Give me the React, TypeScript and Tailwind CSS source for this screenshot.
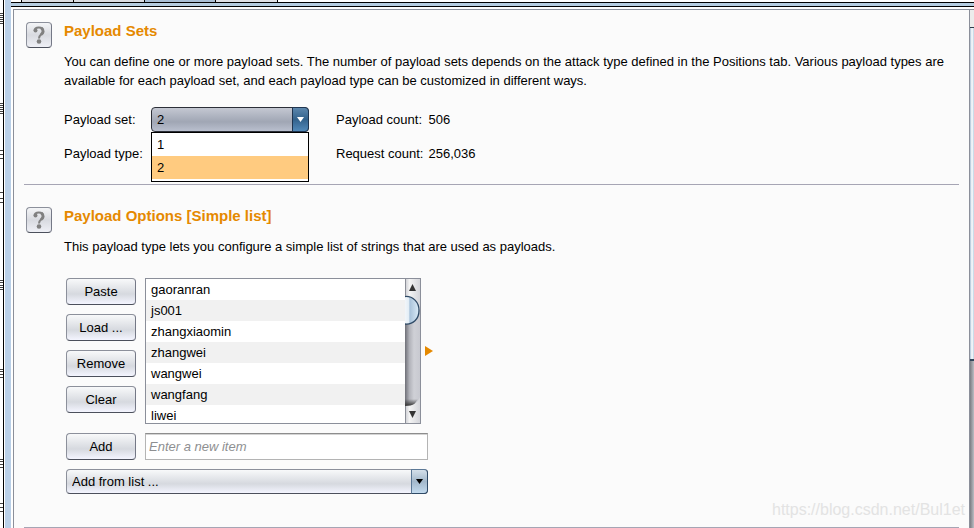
import React, { useState } from "react";

const payloads = [
  "gaoranran",
  "js001",
  "zhangxiaomin",
  "zhangwei",
  "wangwei",
  "wangfang",
  "liwei",
];

const listActions = ["Paste", "Load ...", "Remove", "Clear"];

// rows where the editor behind the window still shows
const editorMarks = [
  13, 15, 17, 19, 21, 23,
  103, 105, 107, 109, 111, 113,
  150, 154, 158,
  192, 198, 202,
  280, 282, 285, 287, 289,
  369, 371, 374, 377,
  459, 461, 464, 467,
  503, 507, 511,
];

function HelpButton() {
  return (
    <button
      type="button"
      aria-label="Help"
      className="flex h-[26px] w-[26px] shrink-0 items-center justify-center rounded border border-[#8c909b] border-r-[#747886] border-b-[#4c505c] bg-linear-to-b from-[#f4f5f7] via-[#d8dae0] to-[#eff0f6]"
    >
      <svg width="12" height="18" viewBox="0 0 12 18" fill="none" aria-hidden="true">
        <path d="M1.500 4.500C2 0.500 10 0.500 10 5C10 8.500 6 8 6 12.500" stroke="#808080" strokeWidth="2" />
        <path d="M8.500 2C11 4.500 10.500 7 8 8.500" stroke="#808080" strokeWidth="3" />
        <circle cx="2.500" cy="4.500" r="2" fill="#808080" />
        <circle cx="6" cy="15.500" r="2.300" fill="#808080" />
      </svg>
    </button>
  );
}

function PushButton({ label }: { label: string }) {
  return (
    <button
      type="button"
      className="h-[27px] w-[70px] rounded border border-[#8c909b] border-r-[#747886] border-b-[#4c505c] bg-linear-to-b from-[#f8f9fa] via-[#d6d9df] via-60% to-[#f4f5ff]"
    >
      {label}
    </button>
  );
}

function SectionTitle({ children }: { children: React.ReactNode }) {
  return <h2 className="text-[15px] leading-[18px] font-bold text-[#e58900]">{children}</h2>;
}

function ListScrollbar() {
  return (
    <svg width="15" height="144" viewBox="0 0 15 144" className="shrink-0" aria-hidden="true">
      <defs>
        <linearGradient id="cap">
          <stop offset="0" stopColor="#c9cad0" />
          <stop offset="0.3" stopColor="#f4f4f4" />
          <stop offset="1" stopColor="#d4d5da" />
        </linearGradient>
        <linearGradient id="track">
          <stop offset="0" stopColor="#6e6f77" />
          <stop offset="0.3" stopColor="#b2b3ba" />
          <stop offset="0.6" stopColor="#cfd0d6" />
          <stop offset="1" stopColor="#c8c9d0" />
        </linearGradient>
        <linearGradient id="thumb">
          <stop offset="0" stopColor="#f2f6fa" />
          <stop offset="0.25" stopColor="#e4eef6" />
          <stop offset="0.35" stopColor="#aac3da" />
          <stop offset="1" stopColor="#dcecf8" />
        </linearGradient>
        <linearGradient id="shade" x2="0" y2="1">
          <stop offset="0" stopColor="#333" stopOpacity="0" />
          <stop offset="1" stopColor="#333" />
        </linearGradient>
      </defs>
      <rect width="15" height="144" fill="url(#track)" />
      <path d="M0 120H13L8 127H0Z" fill="url(#shade)" />
      <path d="M0 0H15V32C15 22 8 17 0 17Z" fill="url(#cap)" />
      <path d="M0 144H15V118C13 124 8 127 0 127Z" fill="url(#cap)" />
      <path d="M0 17.500C8 17 14 23 14 31.500C14 40 8 46 0 45" fill="url(#thumb)" stroke="#2f4a66" strokeWidth="1.300" />
      <path d="M0 0V17M0 127V144" stroke="#8c8f98" strokeWidth="2" />
      <path d="M4 12L7.500 5L11 12Z" fill="#333" />
      <path d="M4 132L7.500 139L11 132Z" fill="#333" />
    </svg>
  );
}

function WindowScrollbar() {
  return (
    <div className="flex w-[5px] shrink-0 flex-col border-l border-[#8b8f9a]" aria-hidden="true">
      <div className="h-[18px] border-b border-[#2f3d4c] bg-[#ececec]" />
      <div className="h-[333px] border-b-2 border-[#33475b] bg-linear-to-r from-[#a9c1d6] via-white to-[#b9d0e2]" />
      <div className="flex-1 bg-linear-to-r from-[#7c7d83] to-[#bcbdc3]" />
    </div>
  );
}

function App() {
  const [payloadSet, setPayloadSet] = useState("2");
  const [newItem, setNewItem] = useState("");

  return (
    <div className="flex h-screen overflow-hidden bg-white font-['Liberation_Sans',Arial,sans-serif] text-[13px] leading-[19px] text-black">
      <svg className="h-full w-[3px] shrink-0" aria-hidden="true">
        {editorMarks.map((y) => (
          <rect key={y} y={y} width="3" height="1" fill="#444" />
        ))}
      </svg>
      <div className="w-[2px] shrink-0 border-l border-black" />
      <div className="w-[6px] shrink-0 bg-[#bad0e8]" />

      <div className="flex min-w-0 flex-1 flex-col">
        <div className="flex h-[2px] shrink-0 bg-white pl-[10px]">
          <div className="w-[53px] border-x border-black bg-[#d9dce2]" />
          <div className="w-[71px] border-r border-black bg-[#d9dce2]" />
          <div className="w-[70px] bg-[#a9bfd6]" />
          <div className="w-[63px] border-x border-black bg-[#dfe1e6]" />
        </div>
        <div className="h-[5px] shrink-0 border-y border-black bg-[#b4cce0]" />

        <div className="mt-[2px] ml-[2px] flex min-h-0 flex-1 border-t border-l border-[#8b8f9a] bg-[#fbfbfb]">
          <main className="relative min-w-0 flex-1 px-[10px]">
            <section className="flex gap-3 border-b border-[#a6a5b4] pt-3 pb-[18px] pl-[2px]">
              <HelpButton />
              <div className="min-w-0 flex-1">
                <SectionTitle>Payload Sets</SectionTitle>
                <p className="mt-3">
                  You can define one or more payload sets. The number of payload sets depends on the attack type defined in the Positions tab. Various payload types are available for each payload set, and each payload type can be customized in different ways.
                </p>
                <div className="mt-[17px] grid grid-cols-[87px_158px_auto_1fr] items-center gap-y-[9px]">
                  <label htmlFor="payload-set">Payload set:</label>
                  <div className="relative">
                    <div className="relative">
                      <select
                        id="payload-set"
                        value={payloadSet}
                        onChange={(e) => setPayloadSet(e.target.value)}
                        className="block h-[25px] w-full appearance-none rounded border border-[#2c2f38] bg-linear-to-b from-[#c4c8d2] via-[#a0a6b4] via-60% to-[#b9bfce] px-[5px]"
                      >
                        <option>1</option>
                        <option>2</option>
                      </select>
                      <span className="pointer-events-none absolute inset-y-0 right-0 flex w-[17px] items-center justify-center rounded-r border border-[#1f3550] bg-linear-to-b from-[#5c87ad] via-[#33628c] to-[#5289b9]">
                        <svg width="7" height="5" viewBox="0 0 7 5"><path d="M0 0H7L3.500 5Z" fill="#fff" /></svg>
                      </span>
                    </div>
                    <ul role="listbox" aria-label="Payload set" className="absolute inset-x-0 top-full z-10 border border-black bg-white pb-[2px]">
                      {["1", "2"].map((n) => (
                        <li
                          key={n}
                          role="option"
                          aria-selected={n === payloadSet}
                          onClick={() => setPayloadSet(n)}
                          className={`h-[23px] px-[5px] leading-[23px] ${n === payloadSet ? "bg-[#ffcb80]" : ""}`}
                        >
                          {n}
                        </li>
                      ))}
                    </ul>
                  </div>
                  <span className="pl-[27px]">Payload count:</span>
                  <span className="pl-[5px]">506</span>
                  <label htmlFor="payload-type">Payload type:</label>
                  <select id="payload-type" className="h-[25px] w-full appearance-none rounded border border-[#8c909b] bg-[#e4e6ea] px-[5px]">
                    <option>Simple list</option>
                  </select>
                  <span className="pl-[27px]">Request count:</span>
                  <span className="pl-[5px]">256,036</span>
                </div>
              </div>
            </section>

            <section className="flex gap-3 border-b border-[#a6a5b4] pt-[22px] pb-[33px] pl-[2px]">
              <HelpButton />
              <div className="min-w-0 flex-1">
                <SectionTitle>Payload Options [Simple list]</SectionTitle>
                <p className="mt-3">This payload type lets you configure a simple list of strings that are used as payloads.</p>
                <div className="mt-[22px] ml-[2px] flex flex-col gap-[9px]">
                  <div className="flex gap-[9px]">
                    <div className="flex flex-col gap-[9px]">
                      {listActions.map((a) => (
                        <PushButton key={a} label={a} />
                      ))}
                    </div>
                    <div className="flex h-[146px] w-[276px] border border-[#8b8f9a] bg-white">
                      <ul className="min-w-0 flex-1 overflow-hidden">
                        {payloads.map((p) => (
                          <li key={p} className="h-[21px] px-[5px] leading-[21px] even:bg-[#f1f1f1]">{p}</li>
                        ))}
                      </ul>
                      <ListScrollbar />
                    </div>
                    <svg width="8" height="10" viewBox="0 0 8 10" className="-ml-[5px] self-center" aria-hidden="true">
                      <path d="M0 0L8 5L0 10Z" fill="#e58900" />
                    </svg>
                  </div>
                  <div className="flex gap-[9px]">
                    <PushButton label="Add" />
                    <input
                      type="text"
                      aria-label="New item"
                      placeholder="Enter a new item"
                      value={newItem}
                      onChange={(e) => setNewItem(e.target.value)}
                      className="h-[27px] w-[283px] border border-[#b4b4b4] border-t-[#8d8d8d] bg-white px-[3px] shadow-[inset_0_1px_0_#d4d4d4] placeholder:text-[#8e8f91] placeholder:italic"
                    />
                  </div>
                  <div className="relative w-[362px]">
                    <select
                      aria-label="Add from list"
                      className="block h-[25px] w-full appearance-none rounded border border-[#8c909b] border-b-[#4c505c] bg-linear-to-b from-[#f8f9fa] via-[#d6d9df] via-60% to-[#f4f5ff] px-[5px]"
                    >
                      <option>Add from list ...</option>
                    </select>
                    <span className="pointer-events-none absolute inset-y-0 right-0 flex w-[17px] items-center justify-center rounded-r border border-[#5b7896] border-r-[#2f4a66] border-b-[#2f4a66] bg-linear-to-b from-[#d5e0ea] via-[#a3b8cb] to-[#c3dbef]">
                      <svg width="7" height="5" viewBox="0 0 7 5"><path d="M0 0H7L3.500 5Z" fill="#000" /></svg>
                    </span>
                  </div>
                </div>
              </div>
            </section>
            <span className="absolute right-1 bottom-1.5 text-base text-[#e3e3e3]">https://blog.csdn.net/Bul1et</span>
          </main>
          <WindowScrollbar />
        </div>
      </div>
    </div>
  );
}

export default App;
